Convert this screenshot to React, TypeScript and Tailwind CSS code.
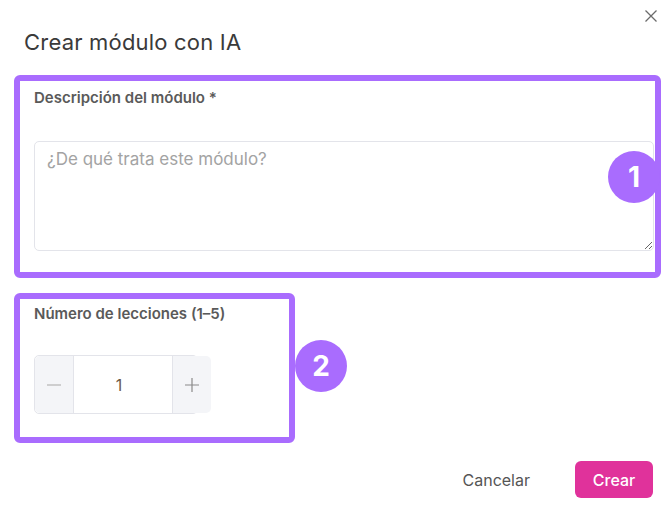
import React from "react";

export default function App() {
  const font = { fontFamily: "Inter, 'Noto Sans', sans-serif" };
  return (
    <div className="w-[670px] h-[520px] bg-white relative overflow-hidden" style={font}>
      <div className="flex justify-end pt-[10px] pr-[13px]">
        <svg width="12" height="12" viewBox="0 0 12 12" className="text-[#6b6b6b]">
          <path d="M0.5 0.5 L11.5 11.5 M11.5 0.5 L0.5 11.5" stroke="currentColor" strokeWidth="1.3" fill="none" />
        </svg>
      </div>
      <div className="pl-[24px] mt-[6px] text-[22px] leading-[28px] text-[#3a3a3a] tracking-[0.2px]">Crear módulo con IA</div>

      <div className="ml-[14px] mt-[19px] w-[647px] h-[203px] border-[6px] border-[#a96cfe] rounded-[6px] relative">
        <div className="pl-[14px] pt-[7px] text-[15px] leading-[20px] font-semibold text-[#5a5a5a]">
          Descripción del módulo *
        </div>
        <textarea
          className="ml-[14px] mt-[33px] block w-[620px] h-[110px] border border-[#e3e4ea] rounded-[5px] px-[12px] py-[5px] text-[17px] leading-[24px] placeholder:text-[#a3a3a3] outline-none"
          placeholder="¿De qué trata este módulo?"
          style={font}
        />
        <div className="absolute left-[588px] top-[70px] w-[52px] h-[52px] rounded-full bg-[#a96cfe] flex items-center justify-center text-white text-[28px] font-bold">
          1
        </div>
      </div>

      <div className="ml-[14px] mt-[15px] w-[281px] h-[150px] border-[6px] border-[#a96cfe] rounded-[6px] relative">
        <div className="pl-[14px] pt-[5px] text-[15px] leading-[20px] font-semibold text-[#5a5a5a]">
          Número de lecciones (1–5)
        </div>
        <div className="ml-[14px] mt-[31px] w-[164px] h-[59px] border border-[#e3e4ea] rounded-[5px] flex">
          <div className="w-[38px] shrink-0 bg-[#f4f5f8] flex items-center justify-center rounded-l-[5px]">
            <svg width="14" height="2" viewBox="0 0 14 2"><path d="M0 1 H14" stroke="#b5b5b5" strokeWidth="1.2" /></svg>
          </div>
          <div className="w-[100px] shrink-0 bg-white border-x border-[#e3e4ea] flex items-center justify-center text-[16px] text-[#6b5a48] pr-[8px]">
            1
          </div>
          <div className="w-[38px] shrink-0 bg-[#f4f5f8] flex items-center justify-center rounded-r-[5px]">
            <svg width="14" height="14" viewBox="0 0 14 14"><path d="M0 7 H14 M7 0 V14" stroke="#8a8a8a" strokeWidth="1.2" /></svg>
          </div>
        </div>
        <div className="absolute left-[275px] top-[41px] w-[52px] h-[52px] rounded-full bg-[#a96cfe] flex items-center justify-center text-white text-[28px] font-bold">
          2
        </div>
      </div>

      <div className="flex justify-end items-center mt-[18px] pr-[17px] gap-[25px]">
        <button className="px-[20px] h-[37px] text-[16px] text-[#555555]" style={font}>Cancelar</button>
        <button className="w-[78px] h-[37px] rounded-[6px] bg-[#e0329b] text-white text-[16px] font-medium" style={font}>Crear</button>
      </div>
    </div>
  );
}
